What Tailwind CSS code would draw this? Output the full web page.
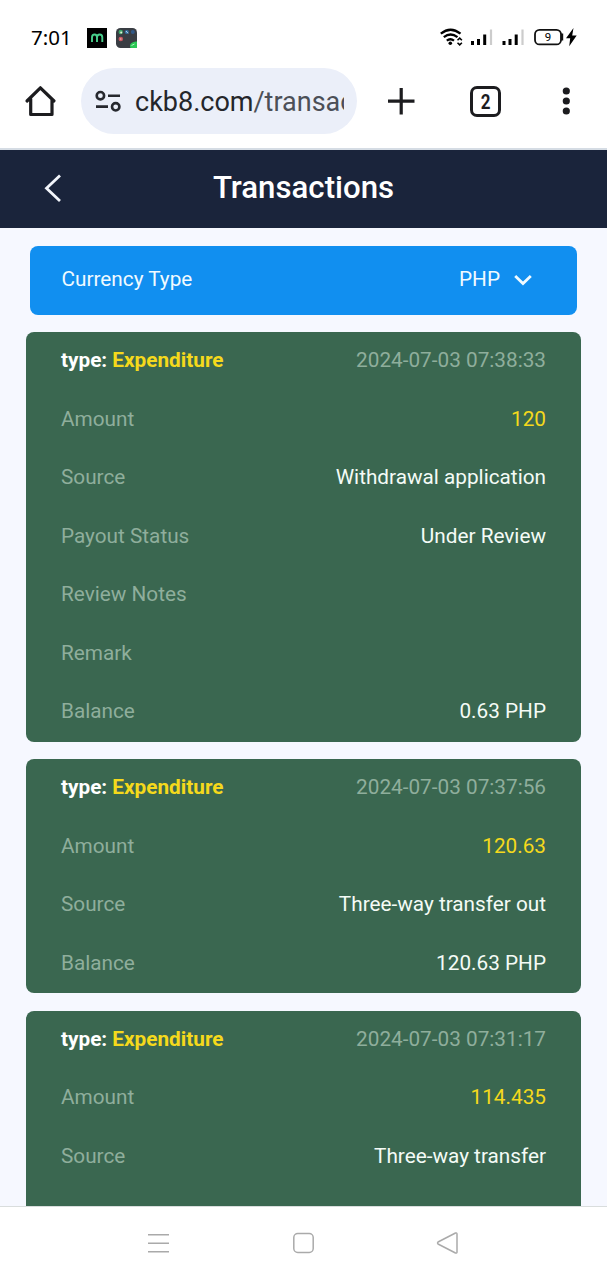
<!DOCTYPE html>
<html lang="en">

<head>
	<meta charset="UTF-8">
	<meta name="viewport" content="width=device-width, initial-scale=1.0">
	<title>Transactions</title>
	<script src="https://cdn.jsdelivr.net/npm/@tailwindcss/browser@4"></script>
</head>

<body class="h-screen flex flex-col overflow-hidden bg-white font-[Roboto,sans-serif]">
	<!-- Status bar -->
	<div class="h-[68px] shrink-0 flex items-center pl-[31px] pr-[29px] pt-[7px] text-black">
		<span class="w-14 text-[20.5px] font-['Noto_Sans',sans-serif]">7:01</span>
		<svg class="w-5 h-5" viewBox="0 0 20 20" fill="none">
			<rect width="20" height="20" fill="#000" />
			<path d="M5 14V9.5Q5 6.5 7.6 6.5Q10 6.5 10 9.5V14M10 9.5Q10 6.5 12.8 6.5Q15.3 6.5 15.3 9.5V14" stroke="#49cf8c" stroke-width="1.9" />
		</svg>
		<svg class="w-[21px] h-5 ml-[9px]" viewBox="0 0 21 20">
			<rect width="21" height="20" rx="4.5" fill="#393d43" />
			<circle cx="4.7" cy="4" r="2.2" fill="#3fa56b" />
			<circle cx="5.2" cy="4.6" r="1" fill="#e8f2d8" />
			<circle cx="10.8" cy="4" r="2.1" fill="#346f9f" />
			<path d="M10 3l2 2.3" stroke="#b5d5ef" stroke-width="1" />
			<circle cx="16.8" cy="4" r="2" fill="#315886" />
			<circle cx="4.8" cy="11" r="2.3" fill="#c95961" />
			<circle cx="4.8" cy="11" r=".8" fill="#f3b7b5" />
			<path d="M21 13.5V20H14.5Q13 17 15.5 15Q18 13 21 13.5Z" fill="#29c653" />
			<path d="M15.5 17.5l3-1.5" stroke="#aef0bc" stroke-width="1" />
		</svg>
		<svg class="ml-auto w-[138px] h-[20px]" viewBox="440 28 138 20" fill="none">
			<!-- wifi -->
			<path d="M440.8 33.7Q450.5 25.8 460.5 33.7" stroke="#000" stroke-width="2.3" />
			<path d="M443.8 37.2Q450.5 31.8 457.5 37.2" stroke="#000" stroke-width="2.3" />
			<path d="M446.8 40.7Q450.3 37.9 454 40.7" stroke="#000" stroke-width="2.3" />
			<circle cx="450.3" cy="43.3" r="1.8" fill="#000" />
			<path d="M457.5 40.3l2.2-2.2 2.2 2.2M457.5 42.7l2.2 2.2 2.2-2.2" stroke="#000" stroke-width="1.5" />
			<!-- signal bars -->
			<path d="M472.5 45V41M478.5 45V39M484.7 45V34.5M504 45V41M510 45V39M516.2 45V34.5" stroke="#000" stroke-width="3" />
			<path d="M491 45V29.5M522.5 45V29.5" stroke="#ccc" stroke-width="2.2" />
			<!-- battery -->
			<rect x="535" y="29.8" width="26" height="14.6" rx="4.5" stroke="#111" stroke-width="1.8" />
			<path d="M562 33.5v7" stroke="#111" stroke-width="2.4" />
			<text x="548" y="41.2" text-anchor="middle" font-size="11.5" fill="#000" font-family="Roboto, sans-serif">9</text>
			<path d="M573.5 28L566 38.3H570.2L569.2 46.3L576.7 35.5H572.2Z" fill="#000" />
		</svg>
	</div>

	<!-- Browser toolbar -->
	<div class="h-[82px] shrink-0 flex items-start border-b-2 border-[#d5dce4] text-[#1c1c1f]">
		<svg class="w-[34px] h-[34px] ml-[23px] mt-4" viewBox="23 84 34 34" fill="none" stroke="currentColor" stroke-width="3.2" stroke-linecap="round" stroke-linejoin="round">
			<path d="M27 101L40.4 87.8L54 101M30.7 99V114.5H52V99" />
		</svg>
		<div class="w-[276px] h-[66px] ml-6 flex items-center pl-[14px] rounded-full bg-[#ebeff9]">
			<svg class="w-[27px] h-6 shrink-0" viewBox="95 89 27 24" fill="none" stroke="#26282e" stroke-width="2.6">
				<circle cx="100.4" cy="95.7" r="3.7" />
				<path d="M108 95.7H120M96 106.6H108" />
				<circle cx="115.7" cy="106.8" r="3.7" />
			</svg>
			<div class="w-[209px] ml-[13px] mt-0.5 overflow-hidden whitespace-nowrap text-[27px] leading-10 text-[#24262b]">ckb8.com<span class="text-[#4c4f57]">/transactions</span></div>
		</div>
		<svg class="w-7 h-7 ml-[30px] mt-[19px]" viewBox="387 87 28 28" fill="none" stroke="currentColor" stroke-width="3.2">
			<path d="M388 101.2H414.5M401.2 88V114.5" />
		</svg>
		<div class="w-[31px] h-[31px] ml-[55px] mt-[18px] flex items-center justify-center rounded-[7px] border-3 border-current text-[20px] font-bold leading-none">
			<span class="scale-x-85">2</span>
		</div>
		<svg class="w-2 h-7 ml-[61px] mt-[19px]" viewBox="0 0 8 28" fill="currentColor">
			<circle cx="4.3" cy="4" r="3.6" />
			<circle cx="4.3" cy="14" r="3.6" />
			<circle cx="4.3" cy="24" r="3.6" />
		</svg>
	</div>

	<!-- Page header -->
	<header class="h-[78px] shrink-0 grid grid-cols-[100px_1fr_100px] items-center bg-[#1a243b] text-white pb-0.5">
		<svg class="w-5 h-[30px] ml-[43px]" viewBox="0 0 20 30" fill="none" stroke="#f2f5fb" stroke-width="2.8">
			<path d="M17 2.5L3.5 15.2L17 28" />
		</svg>
		<h1 class="text-center text-[31.2px] font-medium leading-none">Transactions</h1>
	</header>

	<main class="flex-1 min-h-0 overflow-hidden bg-[#f6f8ff] pt-[17.5px] px-[26px] text-[20.75px]">
		<div class="h-[69px] mx-1 flex items-center pl-[31.5px] pr-[45px] rounded-lg bg-[#118ff0] text-[#f0faff]">
			<span>Currency Type</span>
			<span class="ml-auto">PHP</span>
			<svg class="w-[18px] h-3 ml-[14px]" viewBox="0 0 18 12" fill="none" stroke="currentColor" stroke-width="2.8">
				<path d="M1.2 2L9 9.5L16.8 2" />
			</svg>
		</div>
		<div id="list" class="pt-[17.5px] space-y-[17.5px]"></div>
	</main>

	<!-- Navigation bar -->
	<nav class="h-[74px] shrink-0 border-t border-[#d9dddd] bg-white">
		<svg class="w-full h-full" viewBox="0 1207 607 73" fill="none" stroke="#aaa" stroke-width="1.5" stroke-linejoin="round">
			<path d="M148 1234.7H169M148 1243.2H169M148 1251.7H169" />
			<rect x="293.8" y="1233.5" width="19.4" height="19" rx="4" />
			<path d="M438 1242Q437 1243 438 1244L455.5 1253Q457 1253.500 457 1252V1234Q457 1232.500 455.500 1233Z" />
		</svg>
	</nav>
</body>

<script>
	const transactions = [
		{
			time: "2024-07-03 07:38:33",
			rows: [
				["Amount", "120"],
				["Source", "Withdrawal application"],
				["Payout Status", "Under Review"],
				["Review Notes", ""],
				["Remark", ""],
				["Balance", "0.63 PHP"],
			],
		},
		{
			time: "2024-07-03 07:37:56",
			rows: [
				["Amount", "120.63"],
				["Source", "Three-way transfer out"],
				["Balance", "120.63 PHP"],
			],
		},
		{
			time: "2024-07-03 07:31:17",
			rows: [
				["Amount", "114.435"],
				["Source", "Three-way transfer"],
				["Balance", ""],
			],
		},
	];

	document.getElementById('list').innerHTML = transactions.map(t => `
		<section class="px-[35px] rounded-lg bg-[#3a6750]">
			<div class="h-[58.5px] flex items-center justify-between pb-px">
				<span class="font-bold text-white">type: <span class="text-[#f5d91c]">Expenditure</span></span>
				<span class="text-[#8fae9c]">${t.time}</span>
			</div>
			${t.rows.map(([label, value]) => `
				<div class="h-[58.5px] flex items-center justify-between pb-px">
					<span class="text-[#8fae9c]">${label}</span>
					<span class="${label === 'Amount' ? 'text-[#f5d91c]' : 'text-[#f4fbf6]'}">${value}</span>
				</div>
			`).join('')}
		</section>
	`).join('');
</script>

</html>
